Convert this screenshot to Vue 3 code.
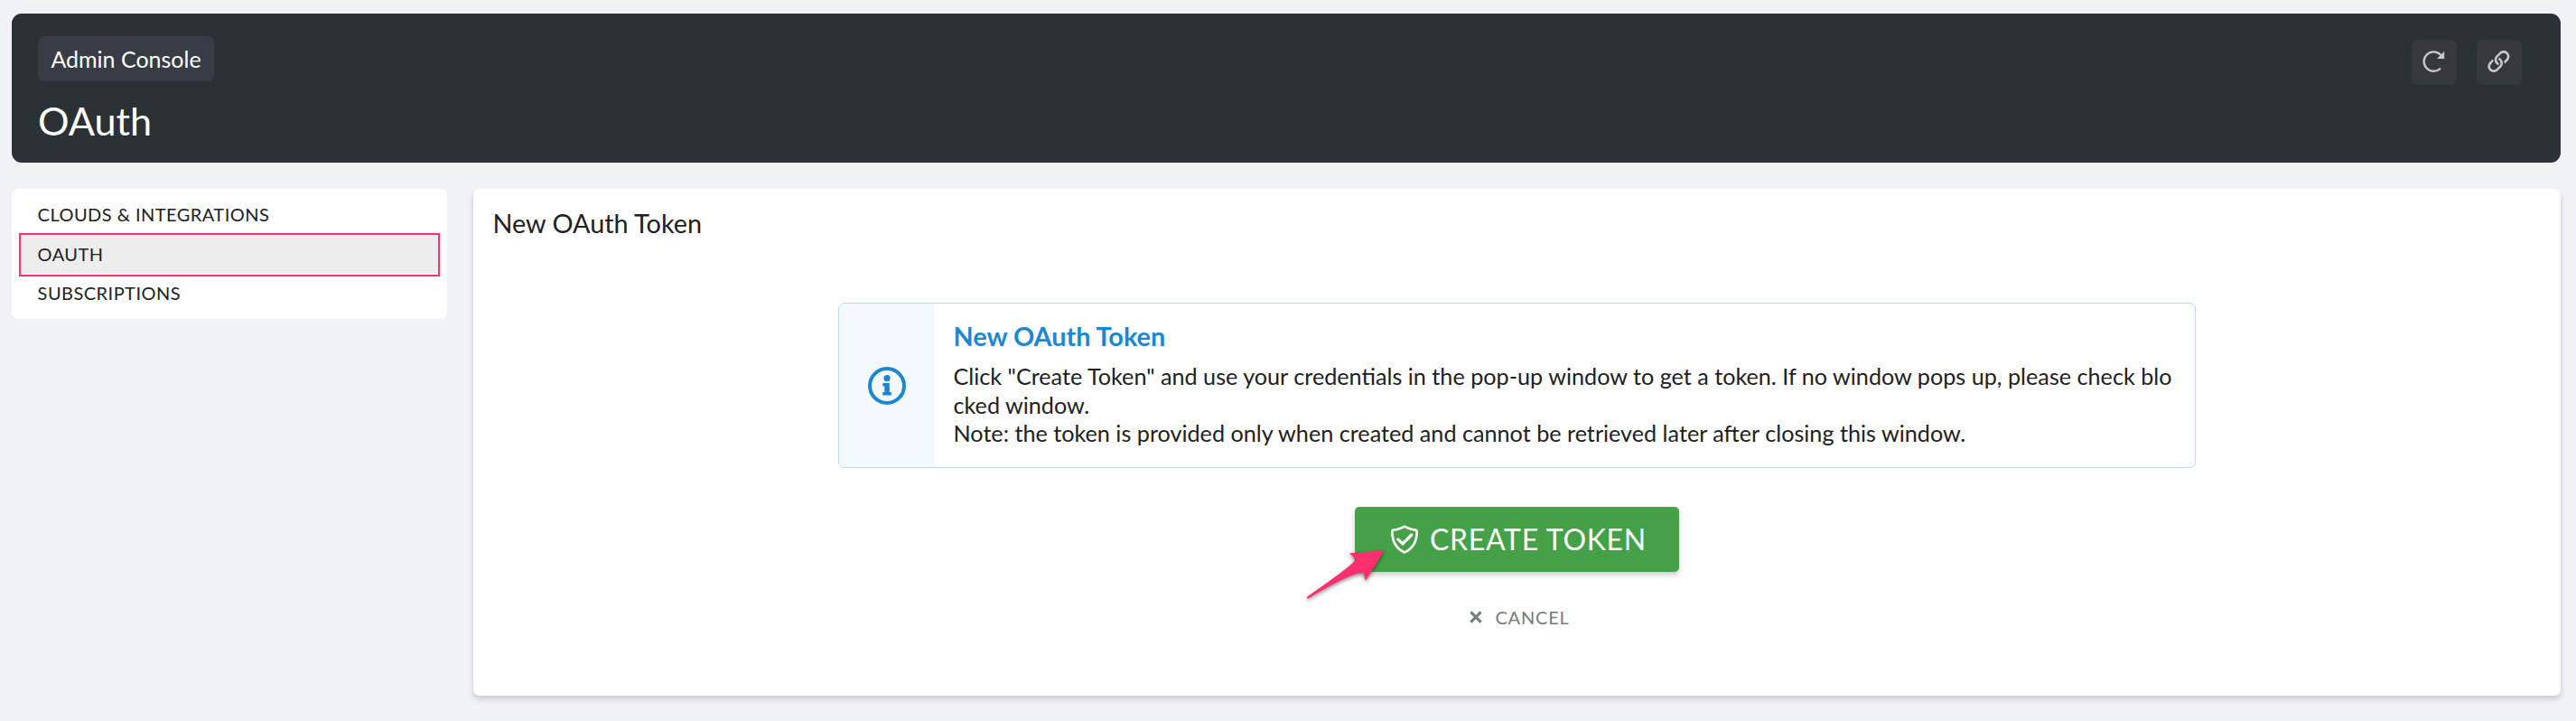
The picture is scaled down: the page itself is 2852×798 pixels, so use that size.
<script setup>
const menu = [
  { label: 'CLOUDS & INTEGRATIONS', active: false },
  { label: 'OAUTH', active: true },
  { label: 'SUBSCRIPTIONS', active: false },
]
</script>

<template>
  <div class="page">
    <header class="header">
      <div>
        <a class="chip"><span>Admin Console</span></a>
        <h1>OAuth</h1>
      </div>
      <div class="actions">
        <button class="icon-btn" aria-label="Refresh">
          <svg width="50" height="50" viewBox="0 0 50 50">
            <path d="M31.2 32.3 A10.7 10.7 0 1 1 31.6 16.2" fill="none" stroke="#c5c7c8" stroke-width="2.4" stroke-linecap="round" />
            <path d="M36.2 12.8 V21 H28 Z" fill="#c5c7c8" />
          </svg>
        </button>
        <button class="icon-btn" aria-label="Copy link">
          <svg width="50" height="50" viewBox="0 0 50 50">
            <g transform="translate(12.4 12) scale(0.0469)" fill="#c5c7c8">
              <path d="M314.222 197.78c51.091 51.091 54.377 132.287 9.75 187.16-6.242 7.73-2.784 3.865-84.94 86.02-54.696 54.696-143.266 54.745-197.99 0-54.711-54.69-54.734-143.255 0-197.99 32.773-32.773 51.835-51.899 63.409-63.457 7.463-7.452 20.331-2.354 20.486 8.192a173.31 173.31 0 0 0 4.746 37.828c.966 4.029-.272 8.269-3.202 11.198L80.632 312.57c-32.755 32.775-32.887 85.892 0 118.8 32.775 32.755 85.892 32.887 118.8 0l75.19-75.2c32.718-32.725 32.777-86.013 0-118.79a83.722 83.722 0 0 0-22.814-16.229c-4.623-2.233-7.182-7.25-6.561-12.346 1.356-11.122 6.296-21.885 14.815-30.405l4.375-4.375c3.625-3.626 9.177-4.594 13.76-2.294 12.999 6.524 25.187 15.211 36.025 26.049zM470.958 41.04c-54.724-54.745-143.294-54.696-197.99 0-82.156 82.156-78.698 78.29-84.94 86.02-44.627 54.873-41.341 136.069 9.75 187.16 10.838 10.838 23.026 19.525 36.025 26.049 4.582 2.3 10.134 1.331 13.76-2.294l4.375-4.375c8.52-8.519 13.459-19.283 14.815-30.405.621-5.096-1.938-10.113-6.561-12.346a83.706 83.706 0 0 1-22.814-16.229c-32.777-32.777-32.718-86.065 0-118.79l75.19-75.2c32.908-32.887 86.025-32.755 118.8 0 32.887 32.908 32.755 86.025 0 118.8l-45.848 45.84c-2.93 2.929-4.168 7.169-3.202 11.198a173.31 173.31 0 0 1 4.746 37.828c.155 10.546 13.023 15.644 20.486 8.192 11.574-11.558 30.636-30.684 63.409-63.457 54.733-54.735 54.71-143.3-.001-197.991z" />
            </g>
          </svg>
        </button>
      </div>
    </header>

    <div class="body">
      <nav class="menu">
        <a v-for="m in menu" :key="m.label" :class="{ active: m.active }">{{ m.label }}</a>
      </nav>

      <main class="card">
        <h2>New OAuth Token</h2>

        <section class="alert">
          <div class="alert-icon">
            <svg width="42" height="42" viewBox="0 0 42 42" fill="#1b87d2">
              <circle cx="21" cy="21" r="19" fill="none" stroke="#1b87d2" stroke-width="4" />
              <circle cx="21" cy="12.7" r="3.6" />
              <path d="M17.3 18 H23.8 V28 H25.8 V31.6 H16.3 V28 H18.3 V21.6 H16.3 V19 Q16.3 18 17.3 18 Z" />
            </svg>
          </div>
          <div class="alert-text">
            <h3>New OAuth Token</h3>
            <p>Click "Create Token" and use your credentials in the pop-up window to get a token. If no window pops up, please check blo<br>cked window.<br>Note: the token is provided only when created and cannot be retrieved later after closing this window.</p>
          </div>
        </section>

        <button class="create">
          <svg width="30" height="32" viewBox="0 0 30 32" fill="none" stroke="#fff">
            <path d="M15 1.6 Q22 5.2 27.4 5.6 Q28.6 5.8 28.6 7 C28.8 19 23 26.6 15 30.4 C7 26.6 1.2 19 1.4 7 Q1.4 5.8 2.6 5.6 Q8 5.2 15 1.6 Z" stroke-width="2.7" stroke-linejoin="round" />
            <path d="M7.8 15.9 L13 20.8 L22.8 11" stroke-width="3.3" stroke-linecap="round" />
          </svg>
          <span>CREATE TOKEN</span>
          <svg class="arrow" width="100" height="68" viewBox="0 0 100 68">
            <path d="M92.7 9.3 L54 12.3 L61.3 19.3 Q57 26 7.6 60.2 Q6.6 61.2 7.2 62 Q8 63 9.4 62 Q52 36 69.3 33.3 L72 42.7 Z" fill="#ff306d" />
          </svg>
        </button>

        <button class="cancel">
          <svg width="14" height="14" viewBox="0 0 14 14">
            <path d="M1.4 1.4 L12.6 12.6 M12.6 1.4 L1.4 12.6" stroke="#747c80" stroke-width="3" />
          </svg>
          <span>CANCEL</span>
        </button>
      </main>
    </div>
  </div>
</template>

<style>
body {
  background: #f1f2f6;
}
</style>

<style scoped>
.page {
  box-sizing: border-box;
  width: 2852px;
  height: 798px;
  padding: 15px 17px 0 13px;
  background: #f1f2f6;
  font-family: Lato, sans-serif;
  color: #212121;
  overflow: hidden;
}
button {
  border: 0;
  padding: 0;
  font-family: inherit;
}
h1, h2, h3, p {
  margin: 0;
  font-weight: 400;
}
svg {
  display: block;
}
.header {
  box-sizing: border-box;
  height: 165px;
  border-radius: 11px;
  background: #2c3135;
  color: #fff;
  display: flex;
  justify-content: space-between;
  padding: 25px 43px 0 29px;
}
.chip {
  box-sizing: border-box;
  display: flex;
  align-items: center;
  justify-content: center;
  width: 195px;
  height: 50px;
  padding-bottom: 1px;
  border-radius: 7px;
  background: #383c44;
  font-size: 25px;
}
h1 {
  margin-top: 15px;
  font-size: 43.2px;
  line-height: 57px;
}
.actions {
  display: flex;
  gap: 22px;
  padding-top: 4px;
}
.icon-btn {
  width: 50px;
  height: 50px;
  border-radius: 7px;
  background: #35393d;
}
.body {
  display: flex;
  align-items: flex-start;
  gap: 29px;
  margin-top: 29px;
}
.menu {
  box-sizing: border-box;
  width: 482px;
  height: 144px;
  padding: 7px 8px;
  border-radius: 7px;
  background: #fff;
  font-size: 20px;
  letter-spacing: 0.46px;
}
.menu a {
  box-sizing: border-box;
  display: block;
  height: 43px;
  line-height: 42px;
  padding-left: 20.6px;
}
.menu a.active {
  height: 48px;
  margin: -1px 0 -3px;
  padding-left: 18.6px;
  border: 2px solid #ff306d;
  background: linear-gradient(#ededed 43px, #fff 43px);
}
.card {
  box-sizing: border-box;
  flex: 1;
  height: 561px;
  border-radius: 7px;
  background: #fff;
  box-shadow: 0 4px 6px rgba(0, 0, 0, 0.16);
  display: flex;
  flex-direction: column;
  align-items: center;
}
h2 {
  align-self: flex-start;
  margin: 20px 0 0 21.5px;
  font-size: 28.8px;
  line-height: 37px;
}
.alert {
  box-sizing: border-box;
  width: 1503px;
  height: 183px;
  margin-top: 69px;
  border: 1px solid #b5dbf7;
  border-radius: 7px;
  display: flex;
  overflow: hidden;
}
.alert-icon {
  width: 105px;
  background: #f4f8ff;
  display: flex;
  align-items: center;
  justify-content: center;
}
.alert-text {
  padding: 18px 0 0 21.5px;
  white-space: nowrap;
}
h3 {
  font-size: 28.8px;
  line-height: 37px;
  font-weight: 700;
  color: #1b87d2;
}
p {
  margin-top: 10px;
  font-size: 25.2px;
  line-height: 31.5px;
}
.create {
  position: relative;
  width: 359px;
  height: 72px;
  margin-top: 43px;
  border-radius: 5px;
  background: #45a147;
  color: #fff;
  box-shadow: 0 3px 6px rgba(0, 0, 0, 0.22);
  display: flex;
  align-items: center;
  padding: 0 0 1px 40px;
  gap: 13px;
  font-size: 32px;
  letter-spacing: 0.7px;
}
.arrow {
  position: absolute;
  left: -60px;
  top: 39px;
  filter: drop-shadow(0 2px 2px rgba(0, 0, 0, 0.45));
}
.cancel {
  height: 30px;
  margin: 35px 0 0 6px;
  background: none;
  color: #747c80;
  display: flex;
  align-items: center;
  gap: 14px;
  font-size: 20px;
  letter-spacing: 0.8px;
}
</style>
